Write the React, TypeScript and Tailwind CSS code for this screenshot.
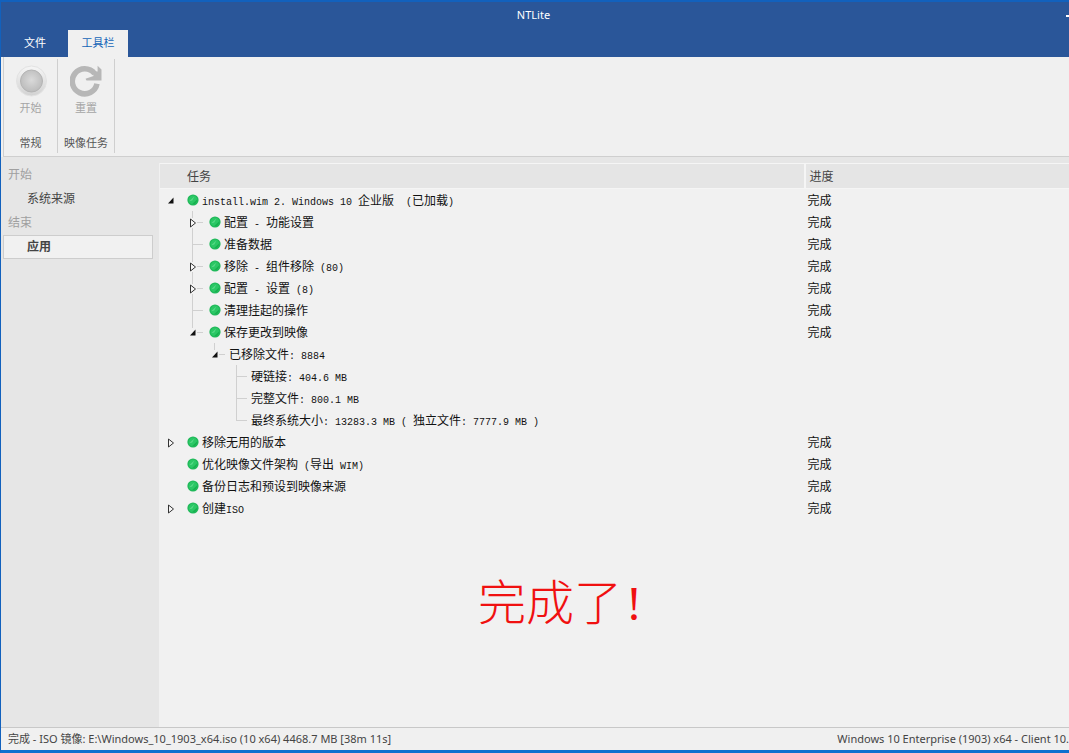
import { ReactNode } from 'react';
import clsx from 'clsx';

type Task = {
    level: number;
    label: string;
    state?: 'open' | 'closed';
    done?: boolean;
    last?: boolean;
};

const tasks: Task[] = [
    { level: 0, label: 'install.wim 2. Windows 10 企业版  (已加载)', state: 'open', done: true },
    { level: 1, label: '配置 - 功能设置', state: 'closed', done: true },
    { level: 1, label: '准备数据', done: true },
    { level: 1, label: '移除 - 组件移除 (80)', state: 'closed', done: true },
    { level: 1, label: '配置 - 设置 (8)', state: 'closed', done: true },
    { level: 1, label: '清理挂起的操作', done: true },
    { level: 1, label: '保存更改到映像', state: 'open', done: true, last: true },
    { level: 2, label: '已移除文件: 8884', state: 'open', last: true },
    { level: 3, label: '硬链接: 404.6 MB' },
    { level: 3, label: '完整文件: 800.1 MB' },
    { level: 3, label: '最终系统大小: 13283.3 MB ( 独立文件: 7777.9 MB )', last: true },
    { level: 0, label: '移除无用的版本', state: 'closed', done: true },
    { level: 0, label: '优化映像文件架构 (导出 WIM)', done: true },
    { level: 0, label: '备份日志和预设到映像来源', done: true },
    { level: 0, label: '创建ISO', state: 'closed', done: true },
];

const indents = ['pl-0', 'pl-[22px]', 'pl-[44px]', 'pl-[66px]'];

function StartIcon() {
    return (
        <svg width="32" height="32" viewBox="0 0 32 32">
            <defs>
                <linearGradient id="rim" x1="0" y1="0" x2="0" y2="1">
                    <stop offset="0" stopColor="#f6f6f6" />
                    <stop offset="1" stopColor="#d2d2d2" />
                </linearGradient>
                <radialGradient id="knob" cx="0.5" cy="0.45" r="0.6">
                    <stop offset="0" stopColor="#dadada" />
                    <stop offset="1" stopColor="#b9b9b9" />
                </radialGradient>
            </defs>
            <circle cx="16.5" cy="16" r="15" fill="url(#rim)" stroke="#e2e2e2" />
            <circle cx="16.5" cy="16" r="11" fill="url(#knob)" stroke="#b4b4b4" />
        </svg>
    );
}

function ResetIcon() {
    return (
        <svg width="32" height="32" viewBox="0 0 32 32">
            <path d="M24.6 8.6A12.5 12.5 0 1 0 27 18.8" fill="none" stroke="#b7b7b7" strokeWidth="5.6" />
            <path d="M27.6 0.8 31.5 4.5V15.5H16.5L15.5 13.8 23.5 11 22.5 6.5H27.6z" fill="#b7b7b7" />
        </svg>
    );
}

function DoneIcon() {
    return (
        <svg width="12" height="12" viewBox="0 0 12 12" className="shrink-0">
            <circle cx="6" cy="6" r="5.6" fill="#1fb859" />
            <circle cx="6" cy="6" r="4.4" fill="#2bc765" />
            <path d="M2.2 7.2 7.4 2.4 5.2 6.4z" fill="#5bdb8a" />
            <path d="M10.3 5.2A4.6 4.6 0 0 1 5 10.3z" fill="#17b04f" />
        </svg>
    );
}

function Branch({ level, state, last }: Task) {
    return (
        <svg width="22" height="22" viewBox="0 0 22 22" className="shrink-0" shapeRendering="crispEdges">
            {level > 0 && (
                <path d={last ? 'M10.5 0V11.5H21' : 'M10.5 0V22M10.5 11.5H21'} fill="none" stroke="#d0d0d0" />
            )}
            {state && <rect x="7" y="7" width="8" height="10" fill="#f1f1f1" />}
            {state === 'closed' && (
                <path
                    d="M8.5 8v8l5-4z"
                    fill="#f7f7f7"
                    stroke="#333"
                    shapeRendering="geometricPrecision"
                />
            )}
            {state === 'open' && <path d="M13.5 8.5v6H8z" fill="#111" shapeRendering="geometricPrecision" />}
        </svg>
    );
}

// Latin runs are half the width of a Chinese character
function TreeText({ text }: { text: string }) {
    return (
        <span className="leading-[18px] whitespace-pre">
            {text.split(/([\x20-\x7e]+)/).map((part, i) =>
                i % 2 ? (
                    <span key={i} className="font-['Liberation_Mono',monospace] text-[10px] leading-none">
                        {part}
                    </span>
                ) : (
                    part
                )
            )}
        </span>
    );
}

function RibbonGroup({ title, label, children }: { title: string; label: string; children: ReactNode }) {
    return (
        <div className="flex flex-col items-center justify-between border-r border-[#cfcfcf] px-[6px] pt-[6px]">
            <button className="flex flex-col items-center text-[#a5a5a5]">
                {children}
                <span className="mt-[3px] leading-4">{label}</span>
            </button>
            <span className="leading-5 text-[#555]">{title}</span>
        </div>
    );
}

export default function App() {
    return (
        <div className="flex min-h-screen flex-col overflow-hidden border-t-2 border-b-3 border-l border-t-[#1261bd] border-b-[#0d70cf] border-l-[#1261bd] bg-[#f0f0f0] font-['Noto_Sans','Noto_Sans_CJK_SC',sans-serif] text-[11px] text-[#444]">
            {/* Title bar and tabs */}
            <header className="bg-[#2a5699] text-white">
                <div className="flex h-7 items-center">
                    <h1 className="flex-1 pb-[2px] text-center leading-4">NTLite</h1>
                    <button aria-label="最小化" className="h-[2px] w-[3px] bg-white" />
                </div>
                <nav className="flex h-[27px] pl-[1px]">
                    <button className="w-[66px]">文件</button>
                    <button className="w-[60px] bg-[#f0f0f0] text-[#1565b8]">工具栏</button>
                </nav>
            </header>

            {/* Ribbon */}
            <div className="ml-[2px] flex h-[100px] border-b border-l border-[#cfcfcf] pt-[2px] pb-[3px]">
                <div className="flex w-[54px] *:flex-1">
                    <RibbonGroup title="常规" label="开始">
                        <StartIcon />
                    </RibbonGroup>
                </div>
                <RibbonGroup title="映像任务" label="重置">
                    <ResetIcon />
                </RibbonGroup>
            </div>

            <div className="flex flex-1 bg-[#e6e6e6]">
                <nav className="w-[158px] shrink-0 pt-[6px] pl-[2px] text-xs">
                    <div className="h-6 pl-[5px] leading-6 text-[#a0a0a0]">开始</div>
                    <button className="block h-6 w-full pl-6 text-left">系统来源</button>
                    <div className="h-6 pl-[5px] leading-6 text-[#a0a0a0]">结束</div>
                    <button className="block h-6 w-[150px] border border-[#cdcdcd] bg-[#f1f1f1] pl-[23px] text-left font-bold">
                        应用
                    </button>
                </nav>

                <main className="mt-[6px] flex-1 bg-[#f1f1f1] pl-[1px]">
                    <table className="w-full table-fixed border-collapse text-left font-['Noto_Sans_CJK_SC',sans-serif] text-xs">
                        <thead>
                            <tr className="h-[25px] border-y border-[#f5f5f5] bg-[#e5e5e5]">
                                <th className="w-[71%] border-r-2 border-[#f5f5f5] p-0 pl-[27px] font-normal">任务</th>
                                <th className="p-0 pl-[3px] font-normal">进度</th>
                            </tr>
                        </thead>
                        <tbody className="text-[#111]">
                            {tasks.map((task) => (
                                <tr key={task.label} className="h-[22px]">
                                    <td className="p-0">
                                        <div className={clsx('flex h-[22px] items-center', indents[task.level])}>
                                            <Branch {...task} />
                                            <span className="flex items-center gap-[3px] pl-[3px]">
                                                {task.done && (
                                                    <span className="pl-[2px]">
                                                        <DoneIcon />
                                                    </span>
                                                )}
                                                <TreeText text={task.label} />
                                            </span>
                                        </div>
                                    </td>
                                    <td className="p-0 pl-[2px]">{task.level < 2 && '完成'}</td>
                                </tr>
                            ))}
                        </tbody>
                    </table>
                    <p className="pt-[50px] pl-[318px] font-['Liberation_Serif','Noto_Sans_CJK_SC',serif] text-5xl leading-[70px] font-light text-[#f01010]">
                        完成了<span className="pl-1">!</span>
                    </p>
                </main>
            </div>

            <footer className="flex h-[23px] items-center justify-between border-t border-[#c8c8c8] pl-[7px] whitespace-nowrap">
                <span>完成 - ISO 镜像: E:\Windows_10_1903_x64.iso (10 x64) 4468.7 MB [38m 11s]</span>
                <span>Windows 10 Enterprise (1903) x64 - Client 10.</span>
            </footer>
        </div>
    );
}
